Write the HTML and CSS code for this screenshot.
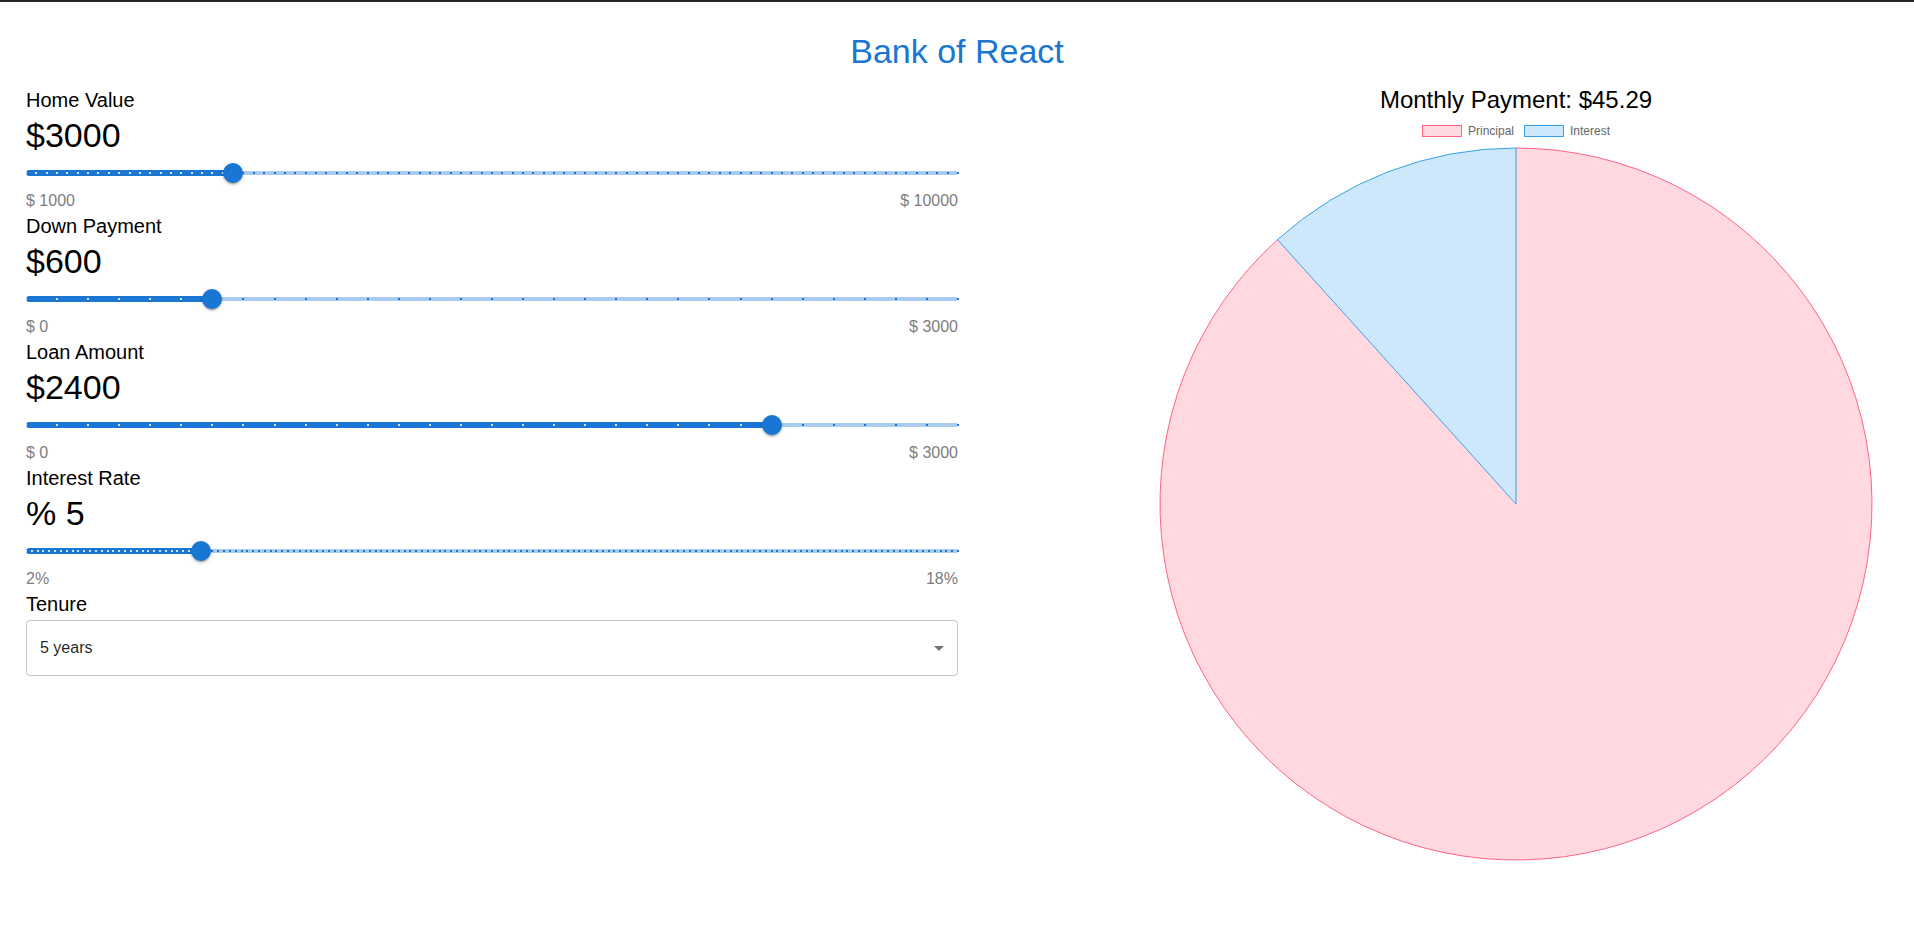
FILE: index.html
```html
<!DOCTYPE html>
<html lang="en">
<head>
<meta charset="utf-8">
<title>Bank of React</title>
<link rel="stylesheet" href="styles.css">
</head>
<body>
<div class="topbar"></div>
<h1 class="app-title">Bank of React</h1>
<main class="layout">
  <section class="calculator">
    <div class="field">
      <div class="field-label">Home Value</div>
      <div class="field-value">$3000</div>
      <div class="slider" style="--p:0.22222;--n:90">
        <span class="rail"></span>
        <span class="track"></span>
        <span class="marks marks-active"></span>
        <span class="marks marks-rail"></span>
        <span class="thumb"></span>
      </div>
      <div class="range"><span>$ 1000</span><span>$ 10000</span></div>
    </div>
    <div class="field">
      <div class="field-label">Down Payment</div>
      <div class="field-value">$600</div>
      <div class="slider" style="--p:0.2;--n:30">
        <span class="rail"></span>
        <span class="track"></span>
        <span class="marks marks-active"></span>
        <span class="marks marks-rail"></span>
        <span class="thumb"></span>
      </div>
      <div class="range"><span>$ 0</span><span>$ 3000</span></div>
    </div>
    <div class="field">
      <div class="field-label">Loan Amount</div>
      <div class="field-value">$2400</div>
      <div class="slider" style="--p:0.8;--n:30">
        <span class="rail"></span>
        <span class="track"></span>
        <span class="marks marks-active"></span>
        <span class="marks marks-rail"></span>
        <span class="thumb"></span>
      </div>
      <div class="range"><span>$ 0</span><span>$ 3000</span></div>
    </div>
    <div class="field">
      <div class="field-label">Interest Rate</div>
      <div class="field-value">% 5</div>
      <div class="slider" style="--p:0.1875;--n:160">
        <span class="rail"></span>
        <span class="track"></span>
        <span class="marks marks-active"></span>
        <span class="marks marks-rail"></span>
        <span class="thumb"></span>
      </div>
      <div class="range"><span>2%</span><span>18%</span></div>
    </div>
    <div class="field">
      <div class="field-label">Tenure</div>
      <div class="select">
        <span class="select-text">5 years</span>
        <svg class="select-arrow" viewBox="0 0 24 24" width="24" height="24"><path d="M7 10l5 5 5-5z"/></svg>
      </div>
    </div>
  </section>
  <section class="chart">
    <h2 class="chart-title">Monthly Payment: $45.29</h2>
    <div class="legend">
      <span class="legend-item"><span class="swatch swatch-principal"></span>Principal</span>
      <span class="legend-item"><span class="swatch swatch-interest"></span>Interest</span>
    </div>
    <svg class="pie" width="714" height="714" viewBox="0 0 714 714">
      <path class="slice-principal" d="M357,357 L357,1 A356,356 0 1 1 118.5,92.7 Z"/>
      <path class="arc-principal" d="M357,1 A356,356 0 1 1 118.5,92.7"/>
      <path class="slice-interest" d="M357,357 L118.5,92.7 A356,356 0 0 1 357,1 Z"/>
    </svg>
  </section>
</main>
</body>
</html>
```
FILE: styles.css
```css
html, body {
  margin: 0;
  padding: 0;
  background: #fff;
}

body {
  font-family: "Liberation Sans", Arial, sans-serif;
  color: #000;
  height: 947px;
  overflow: hidden;
}

.topbar {
  height: 2px;
  background: #262626;
}

.app-title {
  margin: 29px 0 17px;
  font-size: 34px;
  line-height: 40px;
  font-weight: 400;
  color: #1976d2;
  text-align: center;
}

.layout {
  display: grid;
  grid-template-columns: 932px 1fr;
  column-gap: 160px;
  padding-left: 26px;
  align-items: start;
}

.field-label {
  font-size: 20px;
  line-height: 24px;
}

.field-value {
  font-size: 34px;
  line-height: 45px;
  padding-top: 1px;
}

.slider {
  position: relative;
  height: 30px;
}

.rail {
  position: absolute;
  left: 0;
  right: 0;
  top: 13px;
  height: 4px;
  border-radius: 2px;
  background: #1976d2;
  opacity: 0.38;
}

.track {
  position: absolute;
  left: 0;
  top: 12px;
  height: 4px;
  width: calc(var(--p) * 100%);
  border: 1px solid #1976d2;
  border-radius: 3px;
  background: #1976d2;
}

.marks {
  position: absolute;
  left: -1px;
  right: -1px;
  top: 14px;
  height: 2px;
  background: repeating-linear-gradient(to right, var(--c) 0 2px, transparent 2px calc((100% - 2px) / var(--n)));
}

.marks-active {
  --c: rgba(255, 255, 255, 0.8);
  clip-path: inset(0 calc((1 - var(--p)) * 100%) 0 0);
}

.marks-rail {
  --c: #1976d2;
  clip-path: inset(0 0 0 calc(var(--p) * 100% + 2px));
}

.thumb {
  position: absolute;
  top: 5px;
  left: calc(var(--p) * 100%);
  width: 20px;
  height: 20px;
  margin-left: -10px;
  border-radius: 50%;
  background: #1976d2;
  box-shadow: 0 3px 1px -2px rgba(0, 0, 0, 0.2), 0 2px 2px 0 rgba(0, 0, 0, 0.14), 0 1px 5px 0 rgba(0, 0, 0, 0.12);
}

.range {
  display: flex;
  justify-content: space-between;
  font-size: 16px;
  line-height: 26px;
  color: #7d7d7d;
}

.select {
  margin-top: 4px;
  height: 56px;
  box-sizing: border-box;
  border: 1px solid rgba(0, 0, 0, 0.23);
  border-radius: 4px;
  display: flex;
  align-items: center;
  justify-content: space-between;
  padding: 0 6px 0 13px;
}

.select-text {
  font-size: 16px;
  color: rgba(0, 0, 0, 0.87);
}

.select-arrow {
  fill: rgba(0, 0, 0, 0.54);
  display: block;
}

.chart {
  display: flex;
  flex-direction: column;
  align-items: center;
}

.chart-title {
  margin: 0;
  font-size: 24px;
  line-height: 24px;
  font-weight: 400;
}

.legend {
  display: flex;
  gap: 10px;
  margin-top: 13px;
  height: 12px;
  font-size: 12px;
  line-height: 12px;
  color: #666;
}

.legend-item {
  display: flex;
  align-items: center;
  gap: 6px;
}

.swatch {
  width: 40px;
  height: 12px;
  box-sizing: border-box;
  border: 1px solid;
}

.swatch-principal {
  background: rgba(255, 99, 132, 0.25);
  border-color: rgb(255, 99, 132);
}

.swatch-interest {
  background: rgba(54, 162, 235, 0.25);
  border-color: rgb(54, 162, 235);
}

.pie {
  display: block;
  margin-top: 10px;
}

.slice-principal {
  fill: rgba(255, 99, 132, 0.25);
  stroke: none;
}

.arc-principal {
  fill: none;
  stroke: rgb(255, 99, 132);
  stroke-width: 1;
}

.slice-interest {
  fill: rgba(54, 162, 235, 0.25);
  stroke: rgb(54, 162, 235);
  stroke-width: 1;
}
```
